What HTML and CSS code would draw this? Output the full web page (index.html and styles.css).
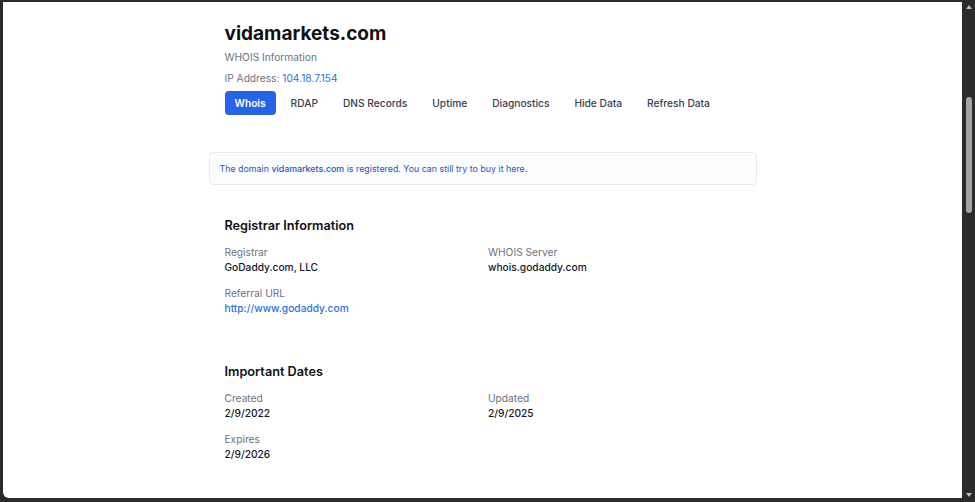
FILE: index.html
```html
<!DOCTYPE html>
<html>

<head>
    <title>vidamarkets.com - WHOIS</title>
    <link rel="stylesheet" href="styles.css">
</head>

<body>
    <div class="frame">
        <div class="window">
            <div class="page">
                <div class="header">
                    <h1>vidamarkets.com</h1>
                    <p class="subtitle">WHOIS Information</p>
                    <p class="subtitle ip">IP Address: <a href="#">104.18.7.154</a></p>
                    <nav class="tabs">
                        <button class="tab active">Whois</button>
                        <button class="tab">RDAP</button>
                        <button class="tab">DNS Records</button>
                        <button class="tab">Uptime</button>
                        <button class="tab">Diagnostics</button>
                        <button class="tab">Hide Data</button>
                        <button class="tab">Refresh Data</button>
                    </nav>
                </div>

                <div class="notice">
                    The domain <strong>vidamarkets.com</strong> is registered. You can still try to buy it here.
                </div>

                <section class="section">
                    <h2>Registrar Information</h2>
                    <div class="fields">
                        <div class="field">
                            <div class="label">Registrar</div>
                            <div class="value">GoDaddy.com, LLC</div>
                        </div>
                        <div class="field">
                            <div class="label">WHOIS Server</div>
                            <div class="value">whois.godaddy.com</div>
                        </div>
                        <div class="field">
                            <div class="label">Referral URL</div>
                            <div class="value"><a href="#">http://www.godaddy.com</a></div>
                        </div>
                    </div>
                </section>

                <section class="section">
                    <h2>Important Dates</h2>
                    <div class="fields">
                        <div class="field">
                            <div class="label">Created</div>
                            <div class="value">2/9/2022</div>
                        </div>
                        <div class="field">
                            <div class="label">Updated</div>
                            <div class="value">2/9/2025</div>
                        </div>
                        <div class="field">
                            <div class="label">Expires</div>
                            <div class="value">2/9/2026</div>
                        </div>
                    </div>
                </section>
            </div>
        </div>

        <div class="scrollbar">
            <span class="arrow up"></span>
            <div class="track">
                <div class="thumb"></div>
            </div>
            <span class="arrow down"></span>
        </div>
    </div>
</body>

</html>
```

FILE: styles.css
```css
html,
body {
    margin: 0;
    height: 100%;
}

body {
    font-family: Inter, "Noto Sans", sans-serif;
    background-color: #2b2b2b;
    color: #111827;
    overflow: hidden;
}

.frame {
    display: flex;
    height: 502px;
}

.window {
    flex: 1;
    background-color: #fff;
    margin: 2px 0 4px 3px;
    border-bottom-left-radius: 6px;
    overflow: hidden;
}

.page {
    width: 548px;
    margin: 0 auto;
}

.header {
    padding: 20px 16px 0;
}

h1 {
    margin: 0;
    font-size: 19px;
    line-height: 24px;
    font-weight: 700;
    color: #111;
}

.subtitle {
    margin: 3px 0 0;
    font-size: 10.2px;
    line-height: 16px;
    color: #6b7280;
}

.subtitle.ip {
    margin-top: 5px;
}

.subtitle a {
    color: #2f6fdf;
    text-decoration: none;
}

.tabs {
    display: flex;
    gap: 5px;
    margin-top: 5px;
}

.tab {
    height: 24px;
    padding: 0 10px;
    border: none;
    border-radius: 4px;
    background: none;
    font-family: inherit;
    font-size: 10.2px;
    font-weight: 500;
    color: #374151;
    cursor: pointer;
}

.tab.active {
    background-color: #2563eb;
    color: #fff;
    font-weight: 600;
}

.notice {
    margin-top: 37px;
    padding: 8px 10px;
    border: 1px solid #e6ebef;
    border-radius: 4px;
    background-color: #fafcfd;
    font-size: 8.85px;
    line-height: 15px;
    color: #2d53c6;
}

.notice strong {
    font-weight: 500;
}

.section {
    padding: 0 16px;
    margin-top: 32px;
}

.section + .section {
    margin-top: 47px;
}

h2 {
    margin: 0;
    font-size: 12.7px;
    line-height: 18px;
    font-weight: 600;
    color: #111;
}

.fields {
    display: grid;
    grid-template-columns: 1fr 1fr;
    column-gap: 11px;
    row-gap: 11px;
    margin-top: 10px;
}

.label {
    font-size: 10.2px;
    line-height: 15px;
    color: #6b7280;
}

.value {
    font-size: 10.2px;
    line-height: 15px;
    font-weight: 500;
    color: #111827;
}

.value a {
    color: #2f6fdf;
    text-decoration: none;
}

.scrollbar {
    width: 13px;
    display: flex;
    flex-direction: column;
    align-items: center;
}

.arrow {
    width: 0;
    height: 0;
    border-left: 3px solid transparent;
    border-right: 3px solid transparent;
}

.arrow.up {
    margin-top: 5px;
    border-bottom: 4px solid #bdbdbd;
}

.arrow.down {
    margin-bottom: 5px;
    border-top: 4px solid #bdbdbd;
}

.track {
    flex: 1;
    width: 100%;
    padding-top: 88px;
    box-sizing: border-box;
}

.thumb {
    width: 6px;
    height: 116px;
    margin: 0 auto;
    border-radius: 3px;
    background-color: #a3a3a3;
}
```
